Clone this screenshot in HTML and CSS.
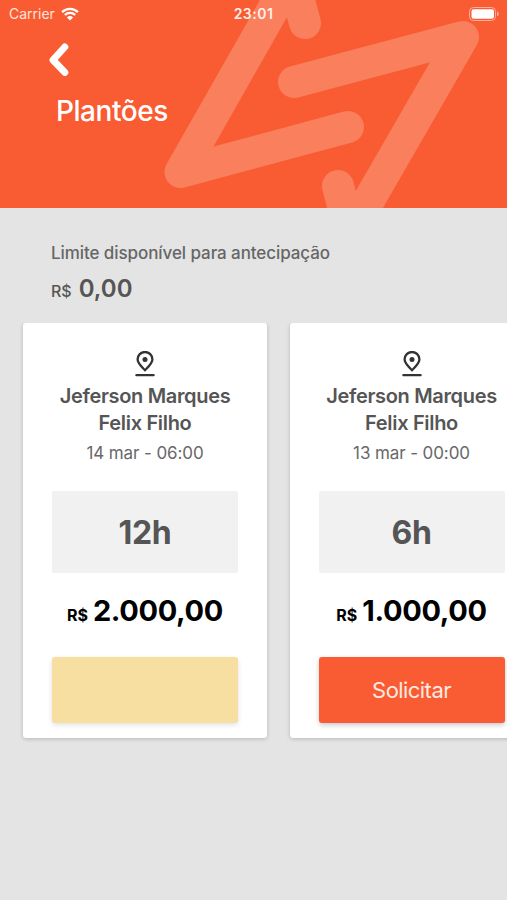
FILE: index.html
```html
<!DOCTYPE html>
<html lang="pt-BR">

<head>
    <meta charset="UTF-8">
    <meta name="viewport" content="width=device-width, initial-scale=1.0">
    <title>Plantões</title>
    <link rel="stylesheet" href="styles.css">
</head>

<body>
    <header class="header">
        <svg class="headerLogo" viewBox="0 0 507 208">
            <path d="M305 23L292 -24L180.5 172L348 127M294 82L463 37L350 233L338 186" />
        </svg>
        <div class="statusBar">
            <div class="carrier">
                <span>Carrier</span>
                <svg class="wifi" width="18" height="14" viewBox="0 0 18 14">
                    <path class="wifiArc" d="M1.1 5.1a11.2 11.2 0 0 1 15.8 0" />
                    <path class="wifiArc" d="M3.9 8a7.2 7.2 0 0 1 10.2 0" />
                    <path class="wifiDot" d="M9 13.6L5.9 10.4a4.4 4.4 0 0 1 6.2 0z" />
                </svg>
            </div>
            <span class="clock">23:01</span>
            <svg class="battery" width="31" height="14" viewBox="0 0 31 14">
                <rect class="batteryCase" x="0.5" y="0.5" width="26" height="13" rx="4" />
                <rect class="batteryFill" x="2.5" y="2.3" width="22.5" height="9.4" rx="2.2" />
                <path class="batteryTip" d="M28 4.6c2.3.6 2.3 4.2 0 4.8z" />
            </svg>
        </div>
        <button type="button" class="backBtn">
            <svg width="20" height="34" viewBox="0 0 20 34">
                <path d="M15.8 4L4 17L15.8 29.4" />
            </svg>
        </button>
        <h1 class="title">Plantões</h1>
    </header>

    <section class="limit">
        <p class="limitLabel">Limite disponível para antecipação</p>
        <p class="limitValue"><span class="limitCurrency">R$</span><span class="limitAmount">0,00</span></p>
    </section>

    <main class="cards">
        <div class="card">
            <svg class="pin" width="20" height="26" viewBox="0 0 20 26">
                <path d="M10 19.2C6 15 2.6 12 2.6 8.4a7.4 7.4 0 0 1 14.8 0C17.4 12 14 15 10 19.2zM1.4 24.2h17.2" />
                <circle cx="10" cy="8.5" r="2.5" />
            </svg>
            <h2 class="name">Jeferson Marques<br>Felix Filho</h2>
            <p class="date">14 mar - 06:00</p>
            <div class="hours">12h</div>
            <p class="price"><span class="currency">R$</span><span class="amount">2.000,00</span></p>
            <button type="button" class="cardBtn pending"></button>
        </div>
        <div class="card">
            <svg class="pin" width="20" height="26" viewBox="0 0 20 26">
                <path d="M10 19.2C6 15 2.6 12 2.6 8.4a7.4 7.4 0 0 1 14.8 0C17.4 12 14 15 10 19.2zM1.4 24.2h17.2" />
                <circle cx="10" cy="8.5" r="2.5" />
            </svg>
            <h2 class="name">Jeferson Marques<br>Felix Filho</h2>
            <p class="date">13 mar - 00:00</p>
            <div class="hours">6h</div>
            <p class="price"><span class="currency">R$</span><span class="amount">1.000,00</span></p>
            <button type="button" class="cardBtn">Solicitar</button>
        </div>
    </main>
</body>

</html>
```
FILE: styles.css
```css
*,
*::after,
*::before {
    box-sizing: border-box;
}

body {
    margin: 0;
    min-height: 900px;
    background-color: #e4e4e4;
    color: #555;
    font-family: Inter, 'Liberation Sans', sans-serif;
}

h1,
h2,
p {
    margin: 0;
}

.header {
    position: relative;
    height: 208px;
    background-color: #f95c32;
    color: #fff;
}

.headerLogo {
    position: absolute;
    top: 0;
    left: 0;
    width: 100%;
    height: 208px;
}

.headerLogo path {
    fill: none;
    stroke: #f97f5d;
    stroke-width: 32;
    stroke-linecap: round;
    stroke-linejoin: round;
}

.statusBar {
    position: relative;
    display: grid;
    grid-template-columns: 1fr auto 1fr;
    align-items: center;
    height: 27px;
    padding: 0 7px;
    font-size: 14px;
}

.carrier {
    display: flex;
    align-items: center;
    gap: 6px;
    padding-left: 2px;
    color: #ffe4dc;
}

.wifiArc {
    fill: none;
    stroke: #fff;
    stroke-width: 2.4;
}

.wifiDot,
.batteryFill {
    fill: #fff;
}

.clock {
    font-weight: 600;
    letter-spacing: 0.5px;
    color: #fff0ea;
}

.battery {
    justify-self: end;
}

.batteryCase {
    fill: none;
    stroke: #fcb09b;
}

.batteryTip {
    fill: #fcb09b;
}

.backBtn {
    position: relative;
    display: block;
    margin: 16px 0 0 49px;
    padding: 0;
    height: 34px;
    border: none;
    background: none;
}

.backBtn svg {
    display: block;
}

.backBtn path {
    fill: none;
    stroke: #fff;
    stroke-width: 7;
    stroke-linecap: round;
    stroke-linejoin: round;
}

.title {
    position: relative;
    margin: 16px 0 0 56px;
    font-size: 28px;
    font-weight: 500;
    line-height: 36px;
    letter-spacing: -0.45px;
}

.limit {
    height: 115px;
    padding: 34px 51px 0;
}

.limitLabel {
    font-size: 17px;
    font-weight: 500;
    line-height: 22px;
    letter-spacing: -0.08px;
    color: #666;
}

.limitValue {
    display: flex;
    align-items: baseline;
    gap: 7px;
    margin-top: 10px;
    line-height: 30px;
}

.limitCurrency {
    font-size: 16px;
    font-weight: 500;
}

.limitAmount {
    font-size: 24px;
    font-weight: 600;
}

.cards {
    display: flex;
    gap: 22.5px;
    height: 425px;
    padding-left: 23px;
    overflow: hidden;
}

.card {
    display: flex;
    flex-direction: column;
    align-items: center;
    flex: 0 0 244px;
    height: 415px;
    padding: 28px 29px 0;
    border-radius: 3px;
    background-color: #fff;
    box-shadow: 0 1px 4px rgba(0, 0, 0, 0.2);
}

.pin {
    flex: none;
}

.pin path {
    fill: none;
    stroke: #333;
    stroke-width: 2.3;
    stroke-linecap: round;
}

.pin circle {
    fill: #333;
}

.name {
    margin-top: 6px;
    font-size: 20px;
    font-weight: 600;
    line-height: 27px;
    letter-spacing: -0.33px;
    text-align: center;
    white-space: nowrap;
}

.date {
    margin-top: 5px;
    font-size: 17px;
    line-height: 22px;
    letter-spacing: -0.1px;
    color: #686868;
}

.hours {
    width: 186px;
    height: 82px;
    margin-top: 27px;
    border-radius: 2px;
    background-color: #f1f1f1;
    font-size: 32px;
    font-weight: 700;
    line-height: 83px;
    letter-spacing: -0.3px;
    text-align: center;
}

.price {
    display: flex;
    align-items: baseline;
    gap: 5px;
    height: 40px;
    margin-top: 18px;
    line-height: 40px;
    color: #000;
    white-space: nowrap;
}

.currency {
    font-size: 16px;
    font-weight: 700;
}

.amount {
    font-size: 29px;
    font-weight: 700;
    letter-spacing: -0.35px;
}

.cardBtn {
    width: 186px;
    height: 66px;
    margin-top: 26px;
    border: none;
    border-radius: 3px;
    background-color: #f95c32;
    color: #ffe9e2;
    font-family: inherit;
    font-size: 22px;
    letter-spacing: -0.55px;
    box-shadow: 0 2px 5px rgba(0, 0, 0, 0.22);
}

.pending {
    background-color: #f6dfa0;
    box-shadow: 0 2px 5px rgba(0, 0, 0, 0.12);
}
```
